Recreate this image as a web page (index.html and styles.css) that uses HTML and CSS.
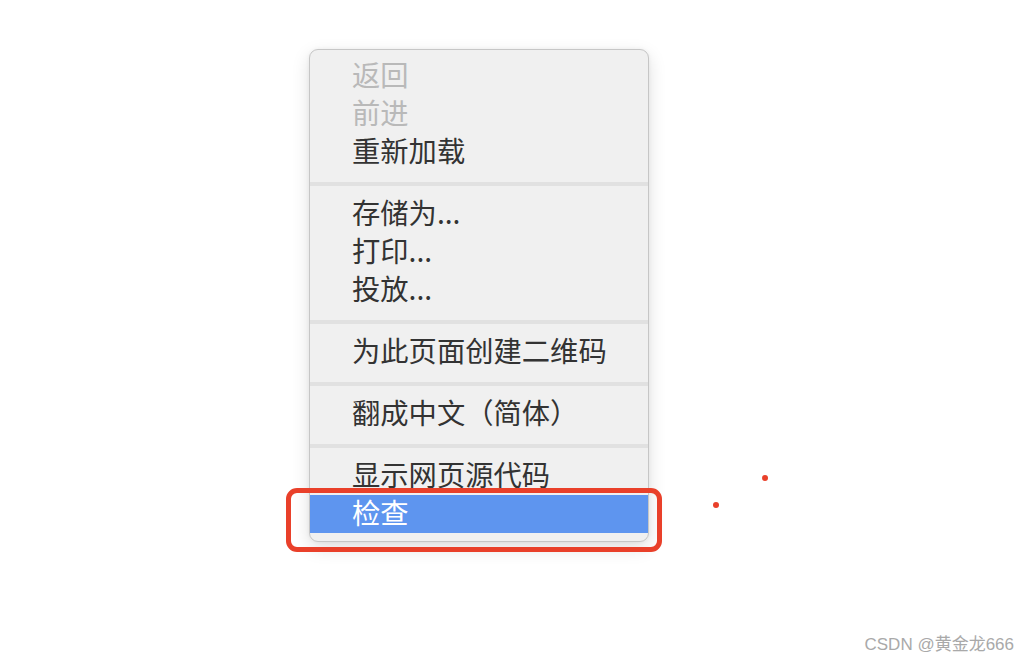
FILE: index.html
```html
<!DOCTYPE html>
<html lang="zh-CN">
<head>
<meta charset="utf-8">
<title>右键菜单</title>
<link rel="stylesheet" href="styles.css">
</head>
<body>
<div class="stage">
  <div class="menu">
    <div class="item disabled">返回</div>
    <div class="item disabled">前进</div>
    <div class="item">重新加载</div>
    <div class="sep"></div>
    <div class="item">存储为...</div>
    <div class="item">打印...</div>
    <div class="item">投放...</div>
    <div class="sep"></div>
    <div class="item">为此页面创建二维码</div>
    <div class="sep"></div>
    <div class="item">翻成中文（简体）</div>
    <div class="sep"></div>
    <div class="item">显示网页源代码</div>
    <div class="item active">检查</div>
  </div>
  <div class="mark-box"></div>
  <div class="dot dot-a"></div>
  <div class="dot dot-b"></div>
</div>
<div class="watermark">CSDN @黄金龙666</div>
</body>
</html>
```

FILE: styles.css
```css
html, body {
  margin: 0;
  padding: 0;
  background: #ffffff;
  width: 1028px;
  height: 662px;
  overflow: hidden;
  font-family: "Noto Sans CJK SC", "Noto Sans", sans-serif;
}

.stage {
  position: relative;
  padding: 49px 0 0 309px;
}

.menu {
  width: 338px;
  background: #f0f0f0;
  border: 1px solid #c6c6c6;
  border-radius: 9px;
  box-shadow: 0 6px 18px rgba(0, 0, 0, 0.13), 0 0 4px rgba(0, 0, 0, 0.05);
  padding: 7px 0 8px;
  display: flex;
  flex-direction: column;
  overflow: hidden;
}

.item {
  height: 38px;
  line-height: 34px;
  padding-left: 42px;
  font-size: 28.3px;
  color: #333333;
  white-space: nowrap;
  box-sizing: border-box;
}

.item.disabled {
  color: #b9b9b9;
}

.item.active {
  background: #5e95ef;
  color: #ffffff;
}

.sep {
  height: 4px;
  background: #e1e1e1;
  margin: 11px 0 9px;
}

.mark-box {
  position: absolute;
  left: 286px;
  top: 488px;
  width: 366px;
  height: 54px;
  border: 5px solid #e9402a;
  border-radius: 11px;
}

.dot {
  position: absolute;
  width: 6px;
  height: 6px;
  border-radius: 50%;
  background: #e9402a;
}

.dot-a {
  left: 762px;
  top: 475px;
}

.dot-b {
  left: 713px;
  top: 502px;
}

.watermark {
  position: absolute;
  right: 14px;
  top: 630px;
  font-family: "Liberation Sans", "Noto Sans CJK SC", sans-serif;
  font-size: 17px;
  color: #a9a9a9;
}
```
